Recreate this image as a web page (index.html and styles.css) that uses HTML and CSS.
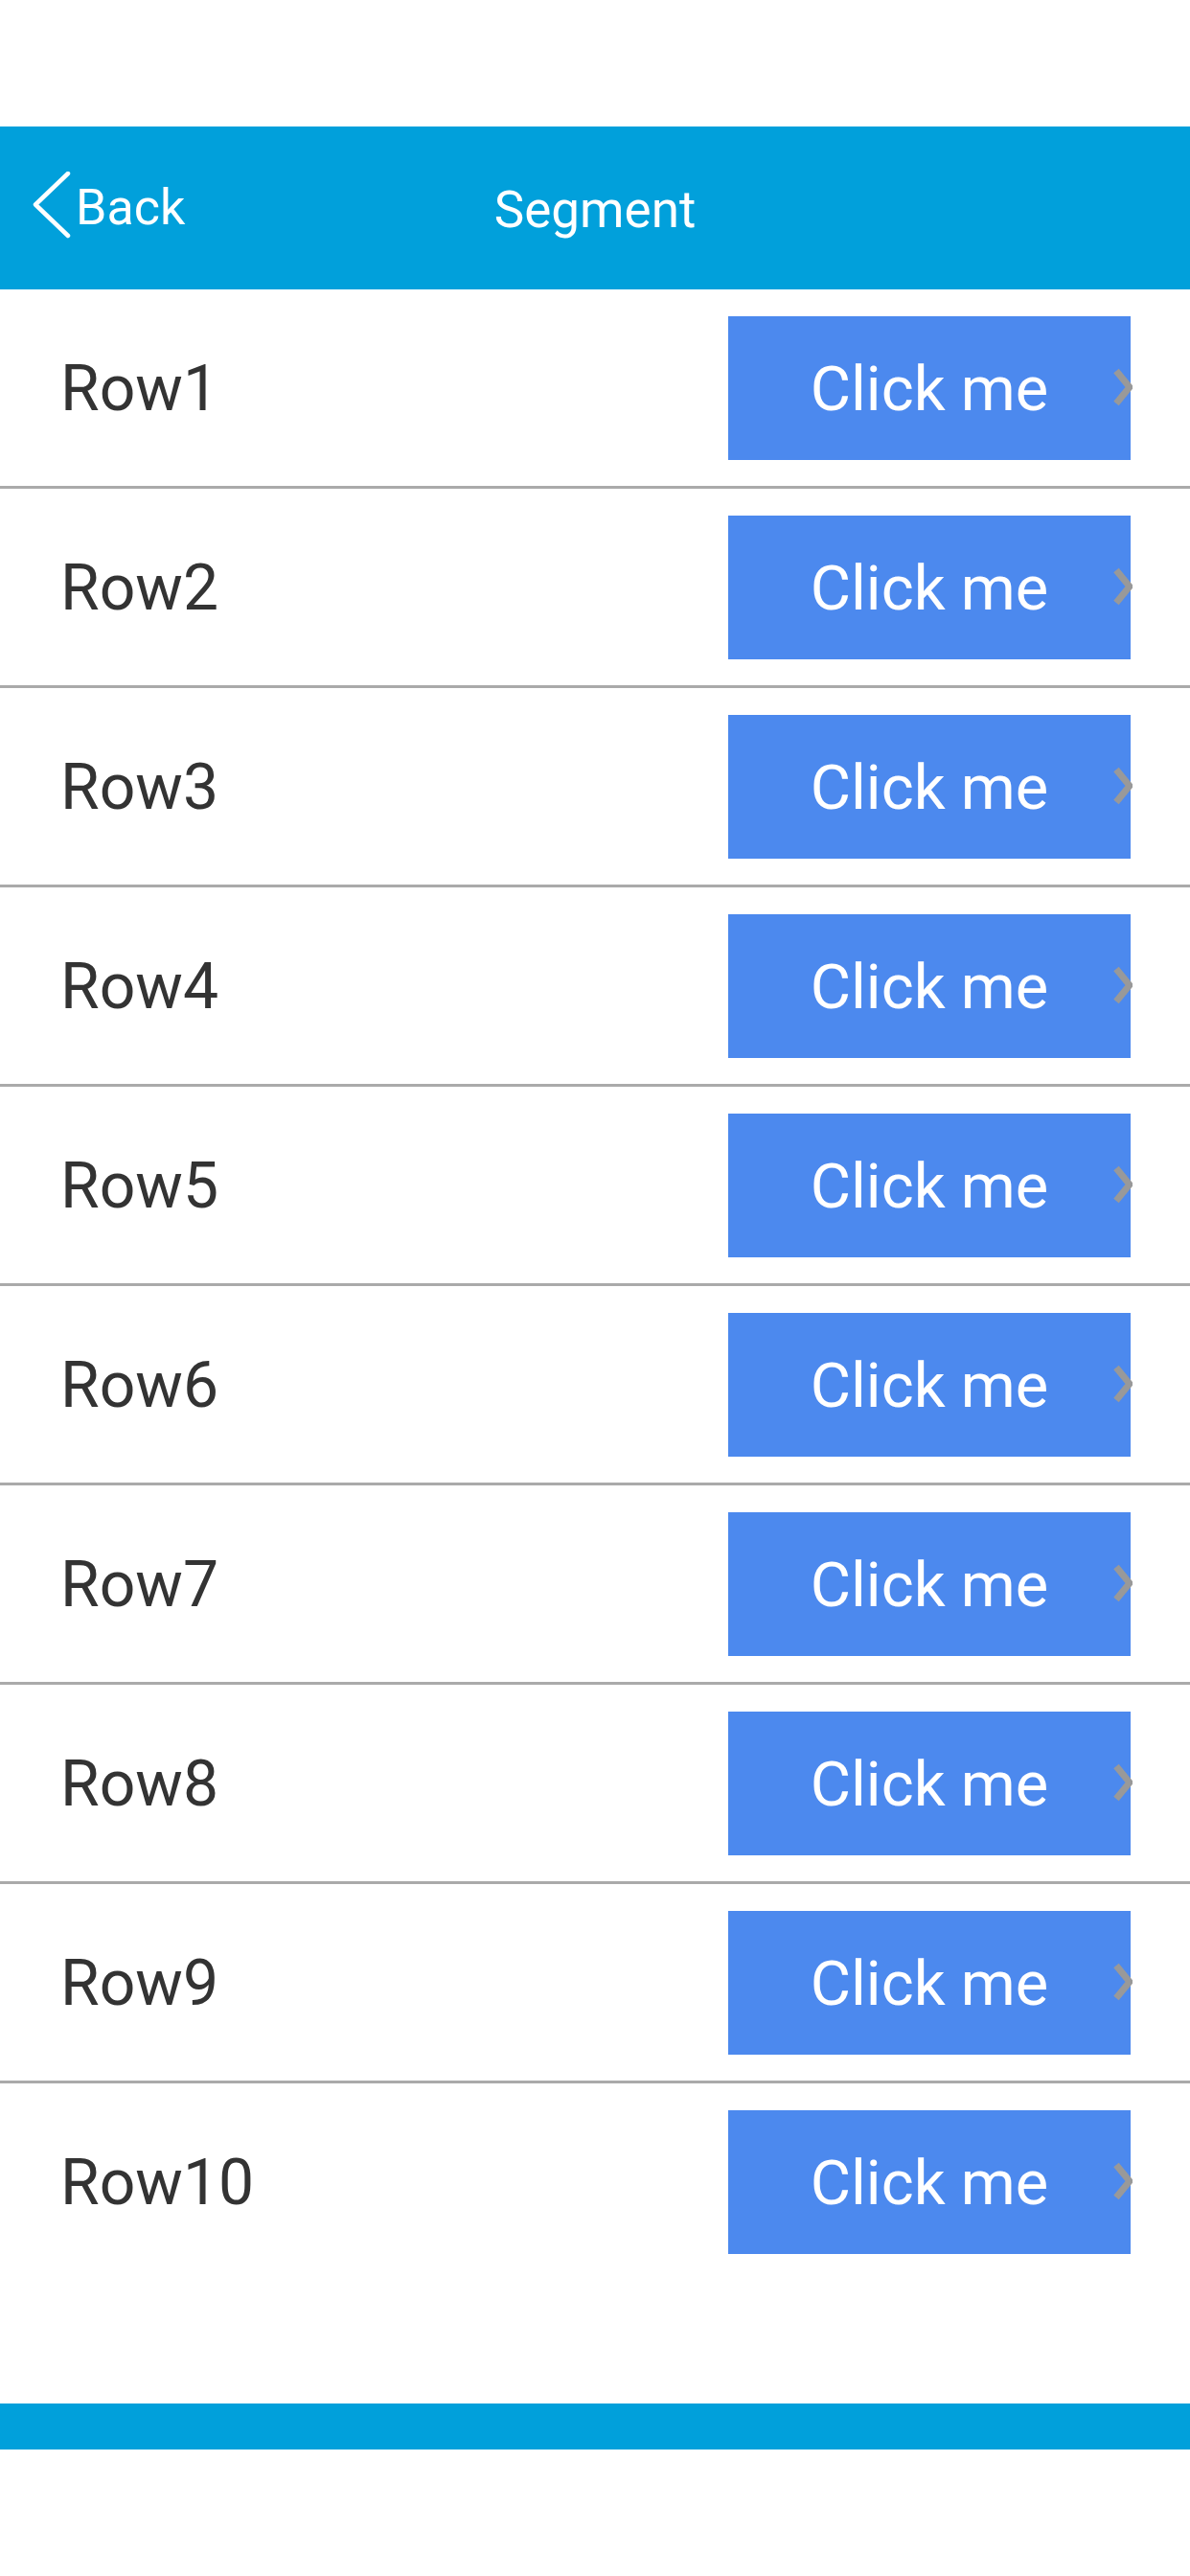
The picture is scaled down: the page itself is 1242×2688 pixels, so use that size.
FILE: index.html
```html
<!DOCTYPE html>
<html>
<head>
<meta charset="utf-8">
<link rel="stylesheet" href="styles.css">
</head>
<body>
<div class="status-space"></div>
<header class="navbar">
  <div class="nav-left">
    <a class="back">
      <svg class="back-icon" width="40" height="70" viewBox="0 0 40 70"><polyline points="37,2 3,34.5 37,67" fill="none" stroke="#fff" stroke-width="4.5" stroke-linecap="round" stroke-linejoin="round"/></svg>
      <span class="back-label">Back</span>
    </a>
  </div>
  <div class="nav-title">Segment</div>
  <div class="nav-right"></div>
</header>
<main class="list">
  <div class="row"><span class="row-label">Row1</span><button class="btn">Click me<svg class="chev" width="20" height="40" viewBox="0 0 20 40"><polyline points="3,3 17,20 3,37" fill="none" stroke="#999" stroke-width="7"/></svg></button></div>
  <div class="row"><span class="row-label">Row2</span><button class="btn">Click me<svg class="chev" width="20" height="40" viewBox="0 0 20 40"><polyline points="3,3 17,20 3,37" fill="none" stroke="#999" stroke-width="7"/></svg></button></div>
  <div class="row"><span class="row-label">Row3</span><button class="btn">Click me<svg class="chev" width="20" height="40" viewBox="0 0 20 40"><polyline points="3,3 17,20 3,37" fill="none" stroke="#999" stroke-width="7"/></svg></button></div>
  <div class="row"><span class="row-label">Row4</span><button class="btn">Click me<svg class="chev" width="20" height="40" viewBox="0 0 20 40"><polyline points="3,3 17,20 3,37" fill="none" stroke="#999" stroke-width="7"/></svg></button></div>
  <div class="row"><span class="row-label">Row5</span><button class="btn">Click me<svg class="chev" width="20" height="40" viewBox="0 0 20 40"><polyline points="3,3 17,20 3,37" fill="none" stroke="#999" stroke-width="7"/></svg></button></div>
  <div class="row"><span class="row-label">Row6</span><button class="btn">Click me<svg class="chev" width="20" height="40" viewBox="0 0 20 40"><polyline points="3,3 17,20 3,37" fill="none" stroke="#999" stroke-width="7"/></svg></button></div>
  <div class="row"><span class="row-label">Row7</span><button class="btn">Click me<svg class="chev" width="20" height="40" viewBox="0 0 20 40"><polyline points="3,3 17,20 3,37" fill="none" stroke="#999" stroke-width="7"/></svg></button></div>
  <div class="row"><span class="row-label">Row8</span><button class="btn">Click me<svg class="chev" width="20" height="40" viewBox="0 0 20 40"><polyline points="3,3 17,20 3,37" fill="none" stroke="#999" stroke-width="7"/></svg></button></div>
  <div class="row"><span class="row-label">Row9</span><button class="btn">Click me<svg class="chev" width="20" height="40" viewBox="0 0 20 40"><polyline points="3,3 17,20 3,37" fill="none" stroke="#999" stroke-width="7"/></svg></button></div>
  <div class="row last"><span class="row-label">Row10</span><button class="btn">Click me<svg class="chev" width="20" height="40" viewBox="0 0 20 40"><polyline points="3,3 17,20 3,37" fill="none" stroke="#999" stroke-width="7"/></svg></button></div>
</main>
<footer class="tabbar"></footer>
</body>
</html>
```
FILE: styles.css
```css
* { box-sizing: border-box; }
html, body {
  margin: 0;
  padding: 0;
  background: #ffffff;
  font-family: Roboto, "Noto Sans", "Liberation Sans", sans-serif;
}
.status-space { height: 132px; }
.navbar {
  height: 170px;
  background: #01a0db;
  display: grid;
  grid-template-columns: 1fr auto 1fr;
  align-items: center;
  color: #fff;
}
.nav-left { padding-left: 34px; }
.back {
  display: inline-flex;
  align-items: center;
  color: #fff;
}
.back-icon { display: block; margin-top: -2px; }
.back-label {
  font-size: 52px;
  margin-left: 5px;
  line-height: 1;
  margin-top: 4px;
}
.nav-title {
  font-size: 53px;
  line-height: 1;
  margin-top: 4px;
}
.list { display: flex; flex-direction: column; }
.row {
  height: 208px;
  border-bottom: 3px solid #aaaaaa;
  display: flex;
  align-items: center;
  justify-content: space-between;
  padding: 0 62px 0 63px;
}
.row.last { border-bottom: none; height: 205px; }
.row-label {
  font-size: 66px;
  color: #333333;
  line-height: 1;
  margin-top: 3px;
}
.btn {
  position: relative;
  width: 420px;
  height: 150px;
  border: none;
  margin: 0;
  padding: 0;
  background: #4c89ee;
  color: #ffffff;
  font-family: Roboto, "Noto Sans", "Liberation Sans", sans-serif;
  font-size: 65px;
  line-height: 1;
  display: flex;
  align-items: center;
  justify-content: center;
  padding-top: 4px;
}
.chev {
  position: absolute;
  left: 402px;
  top: 54px;
}
.tabbar {
  margin-top: 129px;
  height: 48px;
  background: #01a0db;
}
```
